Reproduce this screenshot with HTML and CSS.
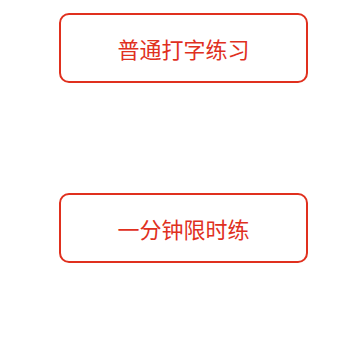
FILE: index.html
```html
<!DOCTYPE html>
<html lang="zh">
<head>
<meta charset="utf-8">
<link rel="stylesheet" href="styles.css">
</head>
<body>
<div class="page">
  <div class="btn">普通打字练习</div>
  <div class="btn">一分钟限时练</div>
</div>
</body>
</html>
```
FILE: styles.css
```css
html, body {
  margin: 0;
  padding: 0;
  background: #fff;
}
.page {
  display: flex;
  flex-direction: column;
  gap: 110px;
  padding: 13px 0 0 59px;
}
.btn {
  box-sizing: border-box;
  width: 249px;
  height: 70px;
  border: 2px solid #e0301e;
  border-radius: 10px;
  display: flex;
  align-items: center;
  justify-content: center;
  color: #e0301e;
  font-family: "Noto Sans CJK SC", "Noto Sans", sans-serif;
  font-size: 22px;
  line-height: 1;
  padding-bottom: 1px;
}
```
